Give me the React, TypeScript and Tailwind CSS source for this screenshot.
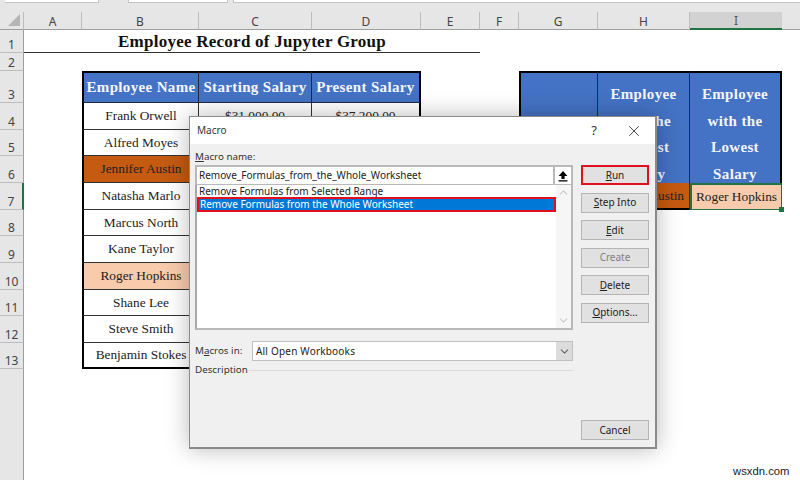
import React from "react";
import { X, ChevronUp, ChevronDown } from "lucide-react";

const serif = "font-['Liberation_Serif',serif]";
const ui = "font-['Noto_Sans',sans-serif]";

const colHead = "flex items-center justify-center border-r border-b border-r-[#bdbdbd] border-b-[#9e9e9e] bg-[#e6e6e6] pt-[2px] text-[12px] text-[#444] font-['Noto_Sans',sans-serif]";
const rowHead = "flex items-end justify-center border-r border-b border-r-[#9e9e9e] border-b-[#bdbdbd] bg-[#e6e6e6] text-[12px] leading-[14px] text-[#444] font-['Noto_Sans',sans-serif]";
const headCell = "flex items-center justify-center border-t-2 border-b border-r border-t-black border-b-[#1f2a44] border-r-[#1f2a44] bg-[#4472c4] text-[15px] font-bold tracking-[0.35px] whitespace-nowrap text-[#f4f6fb] font-['Liberation_Serif',serif]";
const dataCell = "flex items-center justify-center border-b border-r border-[#333] text-[13.33px] whitespace-nowrap text-[#222] font-['Liberation_Serif',serif]";
const stackCell = "row-span-4 border-t-2 border-r border-t-black border-r-[#1f2a44] bg-[#4472c4] pt-[8px] text-center text-[15px] leading-[26.6px] font-bold tracking-[0.35px] text-[#f4f6fb] font-['Liberation_Serif',serif]";

const names: [string, string][] = [
  ["Frank Orwell", "bg-white"],
  ["Alfred Moyes", "bg-white"],
  ["Jennifer Austin", "bg-[#c55a11]"],
  ["Natasha Marlo", "bg-white"],
  ["Marcus North", "bg-white"],
  ["Kane Taylor", "bg-white"],
  ["Roger Hopkins", "bg-[#f8cbad]"],
  ["Shane Lee", "bg-white"],
  ["Steve Smith", "bg-white"],
  ["Benjamin Stokes", "bg-white"],
];

function DialogButton({ children, red, muted }: { children: React.ReactNode; red?: boolean; muted?: boolean }) {
  return (
    <div
      className={`flex h-[20px] w-[68px] items-center justify-center bg-[#e1e1e1] text-[10px] ${
        red ? "border-2 border-[#e01020]" : "border border-[#b4b4b4]"
      } ${muted ? "text-[#808080]" : "text-[#222]"}`}
    >
      <span>{children}</span>
    </div>
  );
}

function Dialog() {
  return (
    <div className={`absolute top-[116px] left-[189px] flex h-[333px] w-[468px] flex-col border border-b-2 border-r-2 border-[#8a8a8a] bg-[#f0f0f0] shadow-[0_0_22px_rgba(0,0,0,0.28)] ${ui}`}>
      <div className="flex h-[27px] items-center bg-white pl-[7px] text-[#333]">
        <span className="text-[10px]">Macro</span>
        <span className="ml-auto text-[13px] text-[#333]">?</span>
        <X size={18} strokeWidth={1.1} className="mr-[12px] ml-[28px] text-[#222]" />
      </div>
      <div className="flex flex-1 pl-[5px]">
        <div className="flex w-[378px] flex-col">
          <div className="flex h-[21px] items-end text-[9.8px] text-[#333]">
            <span><u>M</u>acro name:</span>
          </div>
          <div className="flex h-[20px] items-center border-2 border-b border-[#b9b9b9] bg-white pl-[2px] text-[10px] text-[#222]">
            <span>Remove_Formulas_from_the_Whole_Worksheet</span>
            <div className="ml-auto flex h-full w-[18px] items-center justify-center border-l-2 border-[#b9b9b9] bg-white">
              <svg width="10" height="12" viewBox="0 0 10 12">
                <path d="M5 1 L9.4 6 L6.6 6 L6.6 9 L3.4 9 L3.4 6 L0.6 6 Z" fill="#000" />
                <rect x="0.6" y="10.2" width="8.8" height="1.3" fill="#000" />
              </svg>
            </div>
          </div>
          <div className="flex h-[145px] border-2 border-t-0 border-[#b9b9b9] border-l-[#a8a8a8] bg-white">
            <div className="flex min-w-0 flex-1 flex-col text-[10px] leading-[12px]">
              <div className="h-[12px] pl-[2px] text-[#222]">Remove Formulas from Selected Range</div>
              <div className="flex h-[15px] items-center border-2 border-[#e01020] bg-[#0078d7] pb-[1px] pl-[1px] text-white">Remove Formulas from the Whole Worksheet</div>
            </div>
            <div className="flex w-[15px] flex-col items-center justify-between bg-[#f6f6f6] py-[1px] text-[#c8c8c8]">
              <ChevronUp size={13} />
              <ChevronDown size={13} />
            </div>
          </div>
          <div className="mt-[11px] flex h-[20px] items-center text-[9.8px] text-[#333]">
            <span className="w-[57px]">M<u>a</u>cros in:</span>
            <div className="flex h-full flex-1 items-center border border-[#c0c0c0] bg-white pl-[3px] text-[10px] tracking-[0.2px] text-[#222]">
              <span>All Open Workbooks</span>
              <div className="ml-auto flex h-full w-[16px] items-center justify-center bg-[#dcdcdc] text-[#666]">
                <ChevronDown size={13} />
              </div>
            </div>
          </div>
          <div className="flex h-[19px] items-center text-[9.8px] text-[#333]">
            <span className="mr-[1px]">Description</span>
            <div className="mb-[1px] h-px flex-1 bg-[#dcdcdc]" />
          </div>
        </div>
        <div className="ml-[8px] flex flex-col pt-[21px]">
          <div className="flex flex-col gap-[7.5px]">
            <DialogButton red><u>R</u>un</DialogButton>
            <DialogButton><u>S</u>tep Into</DialogButton>
            <DialogButton><u>E</u>dit</DialogButton>
            <DialogButton muted>Create</DialogButton>
            <DialogButton><u>D</u>elete</DialogButton>
            <DialogButton><u>O</u>ptions...</DialogButton>
          </div>
          <div className="mt-[97.5px]">
            <DialogButton>Cancel</DialogButton>
          </div>
        </div>
      </div>
    </div>
  );
}

export default function App() {
  const letters = ["B", "C", "D", "E", "F", "G", "H"];
  return (
    <div className="relative h-[480px] w-[800px] overflow-hidden bg-white">
      <div className="flex h-[12px] gap-[5px] bg-[#e6e6e6]">
        <div className="ml-[5px] h-[3px] w-[94px] border-r border-b border-[#c4c4c4] bg-white" />
        <div className="ml-[24px] h-[3px] w-[100px] border-x border-b border-[#c4c4c4] bg-white" />
        <div className="h-[3px] flex-1 border-b border-l border-[#c4c4c4] bg-white" />
      </div>
      <div className="grid h-[468px] grid-cols-[24px_58px_117px_113px_109px_59px_39px_79px_92px_92px_18px] grid-rows-[18px_23px_18px_32px_27px_26px_27px_27px_26px_27px_27px_26px_27px_26px_1fr]">
        {/* header row */}
        <div className="relative border-b border-r border-b-[#9e9e9e] border-r-[#bdbdbd] bg-[#e6e6e6]">
          <svg width="12" height="12" viewBox="0 0 12 12" className="absolute right-[3px] bottom-[3px]">
            <polygon points="12,0 12,12 0,12" fill="#b5b5b5" />
          </svg>
        </div>
        <div className={colHead}>A</div>
        {letters.map((l) => (
          <div key={l} className={colHead}>{l}</div>
        ))}
        <div className="flex items-center justify-center border-b-2 border-b-[#217346] bg-[#d2d2d2] pt-[2px] text-[12px] text-[#555] font-['Noto_Sans',sans-serif]">I</div>
        <div className="border-b border-b-[#9e9e9e] bg-[#e6e6e6]" />

        {/* row 1 */}
        <div className={rowHead}>1</div>
        <div className={`col-span-5 flex items-center justify-center border-b border-b-[#333] pt-[1px] text-[17px] font-bold tracking-[0.25px] text-[#111] ${serif}`}>
          Employee Record of Jupyter Group
        </div>
        <div className="col-span-5" />

        {/* row 2 */}
        <div className={rowHead}>2</div>
        <div className="col-span-10" />

        {/* row 3 */}
        <div className={rowHead}>3</div>
        <div />
        <div className={`${headCell} border-l-2 border-l-black`}>Employee Name</div>
        <div className={headCell}>Starting Salary</div>
        <div className={`${headCell} border-r-2 border-r-black`}>Present Salary</div>
        <div />
        <div />
        <div className={`${stackCell} border-l-2 border-l-black`} />
        <div className={stackCell}>Employee<br />with the<br />Highest<br />Salary</div>
        <div className={`${stackCell} border-r-2 border-r-black`}>Employee<br />with the<br />Lowest<br />Salary</div>
        <div />

        {names.map(([name, bg], i) => {
          const row = i + 4;
          const last = row === 13;
          const bottom = last ? "border-b-2 border-b-black" : "";
          return (
            <React.Fragment key={name}>
              <div className={`${rowHead} ${row === 7 ? "border-r-2 border-r-[#217346] bg-[#d2d2d2]" : ""}`}>{row}</div>
              <div />
              <div className={`${dataCell} ${bg} border-l-2 border-l-black ${bottom}`}>{name}</div>
              <div className={`${dataCell} ${bg} ${bottom}`}>{row === 4 ? "$31,000.00" : ""}</div>
              <div className={`${dataCell} ${bg} border-r-2 border-r-black ${bottom}`}>{row === 4 ? "$37,200.00" : ""}</div>
              <div />
              <div />
              {row === 7 ? (
                <>
                  <div className={`${dataCell} border-l-2 border-l-black border-b-2 border-b-black bg-[#c55a11]`} />
                  <div className={`${dataCell} border-b-2 border-b-black bg-[#c55a11]`}>Jennifer Austin</div>
                  <div className={`${dataCell} relative border-2 border-[#217346] bg-[#f8cbad]`}>
                    Roger Hopkins
                    <div className="absolute -right-[3px] -bottom-[3px] h-[5px] w-[5px] bg-[#217346]" />
                  </div>
                </>
              ) : row < 7 ? null : (
                <div className="col-span-3" />
              )}
              <div />
            </React.Fragment>
          );
        })}

        {/* filler */}
        <div className="border-r border-r-[#9e9e9e] bg-[#e6e6e6]" />
        <div className="col-span-10" />
      </div>

      <Dialog />

      <div className="absolute top-[463px] left-[733px] font-['Liberation_Sans',sans-serif] text-[11.3px] text-[#222]">wsxdn.com</div>
    </div>
  );
}
